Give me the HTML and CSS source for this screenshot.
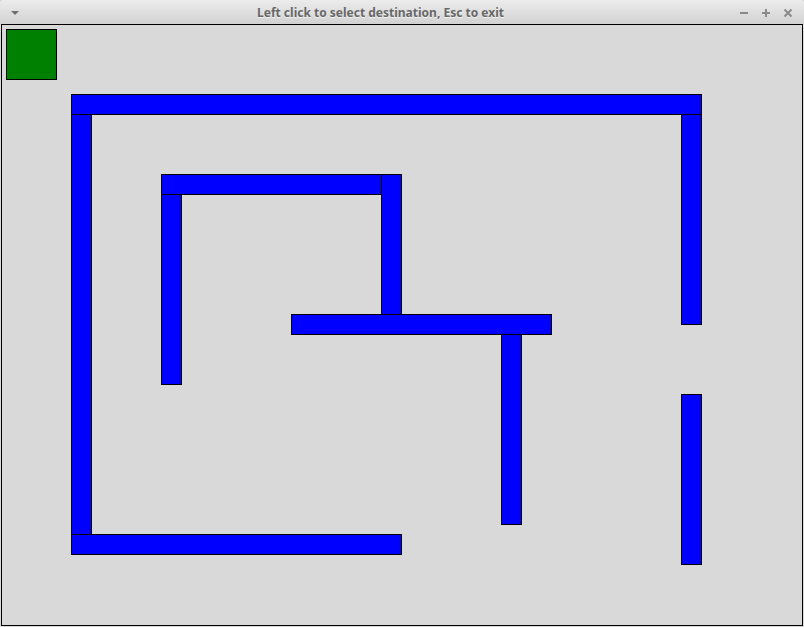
FILE: index.html
```html
<!DOCTYPE html>
<html>
<head>
<meta charset="utf-8">
<link rel="stylesheet" href="styles.css">
</head>
<body>
<div class="window">
  <div class="titlebar">
    <svg class="menu-icon" width="10" height="6" viewBox="0 0 10 6"><polygon points="1,1 9,1 5,5" fill="#6e6e6e"/></svg>
    <div class="title">Left click to select destination, Esc to exit</div>
    <div class="buttons">
      <svg width="10" height="10" viewBox="0 0 10 10"><rect x="1" y="4" width="8" height="2" fill="#8a8a8a"/></svg>
      <svg width="10" height="10" viewBox="0 0 10 10"><rect x="1" y="4" width="8" height="2" fill="#8a8a8a"/><rect x="4" y="1" width="2" height="8" fill="#8a8a8a"/></svg>
      <svg width="10" height="10" viewBox="0 0 10 10"><path d="M1.5 1.5 L8.5 8.5 M8.5 1.5 L1.5 8.5" stroke="#8a8a8a" stroke-width="2"/></svg>
    </div>
  </div>
  <div class="frame">
    <div class="canvas">
      <div class="player"></div>
      <div class="wall" style="left:69px;top:69px;width:631px;height:21px"></div>
      <div class="wall" style="left:69px;top:89px;width:21px;height:421px"></div>
      <div class="wall" style="left:69px;top:509px;width:331px;height:21px"></div>
      <div class="wall" style="left:679px;top:89px;width:21px;height:211px"></div>
      <div class="wall" style="left:679px;top:369px;width:21px;height:171px"></div>
      <div class="wall" style="left:159px;top:149px;width:221px;height:21px"></div>
      <div class="wall" style="left:159px;top:169px;width:21px;height:191px"></div>
      <div class="wall" style="left:379px;top:149px;width:21px;height:141px"></div>
      <div class="wall" style="left:289px;top:289px;width:261px;height:21px"></div>
      <div class="wall" style="left:499px;top:309px;width:21px;height:191px"></div>
    </div>
  </div>
</div>
</body>
</html>
```
FILE: styles.css
```css
html, body {
  margin: 0;
  padding: 0;
  background: #d6d6d6;
}
.window {
  width: 804px;
  height: 627px;
  box-sizing: border-box;
  padding: 0 1px 1px 1px;
  background: linear-gradient(#f0f0f0, #d8d8d8 40px);
  border-radius: 4px 4px 0 0;
  overflow: hidden;
}
.titlebar {
  height: 24px;
  display: flex;
  align-items: center;
  position: relative;
  background: linear-gradient(#ececec, #d2d2d2);
  margin: 0 -1px;
  border-radius: 4px 4px 0 0;
}
.menu-icon {
  margin-left: 10px;
  margin-top: 1px;
}
.title {
  flex: 1;
  text-align: center;
  font-family: "Noto Sans", "Open Sans", sans-serif;
  font-weight: bold;
  font-size: 12px;
  color: #676767;
  text-shadow: 0 1px 0 rgba(255,255,255,0.7);
  padding-left: 2px;
  padding-top: 1px;
}
.buttons {
  display: flex;
  gap: 12px;
  margin-right: 11px;
  margin-top: 1px;
}
.buttons svg {
  display: block;
}
.frame {
  border: 1px solid #000;
  width: 800px;
  height: 600px;
  background: #d9d9d9;
}
.canvas {
  position: relative;
  width: 800px;
  height: 600px;
}
.player {
  position: absolute;
  left: 4px;
  top: 4px;
  width: 51px;
  height: 51px;
  box-sizing: border-box;
  border: 1px solid #000;
  background: #008000;
}
.wall {
  position: absolute;
  box-sizing: border-box;
  border: 1px solid #000;
  background: #0000ff;
}
```
